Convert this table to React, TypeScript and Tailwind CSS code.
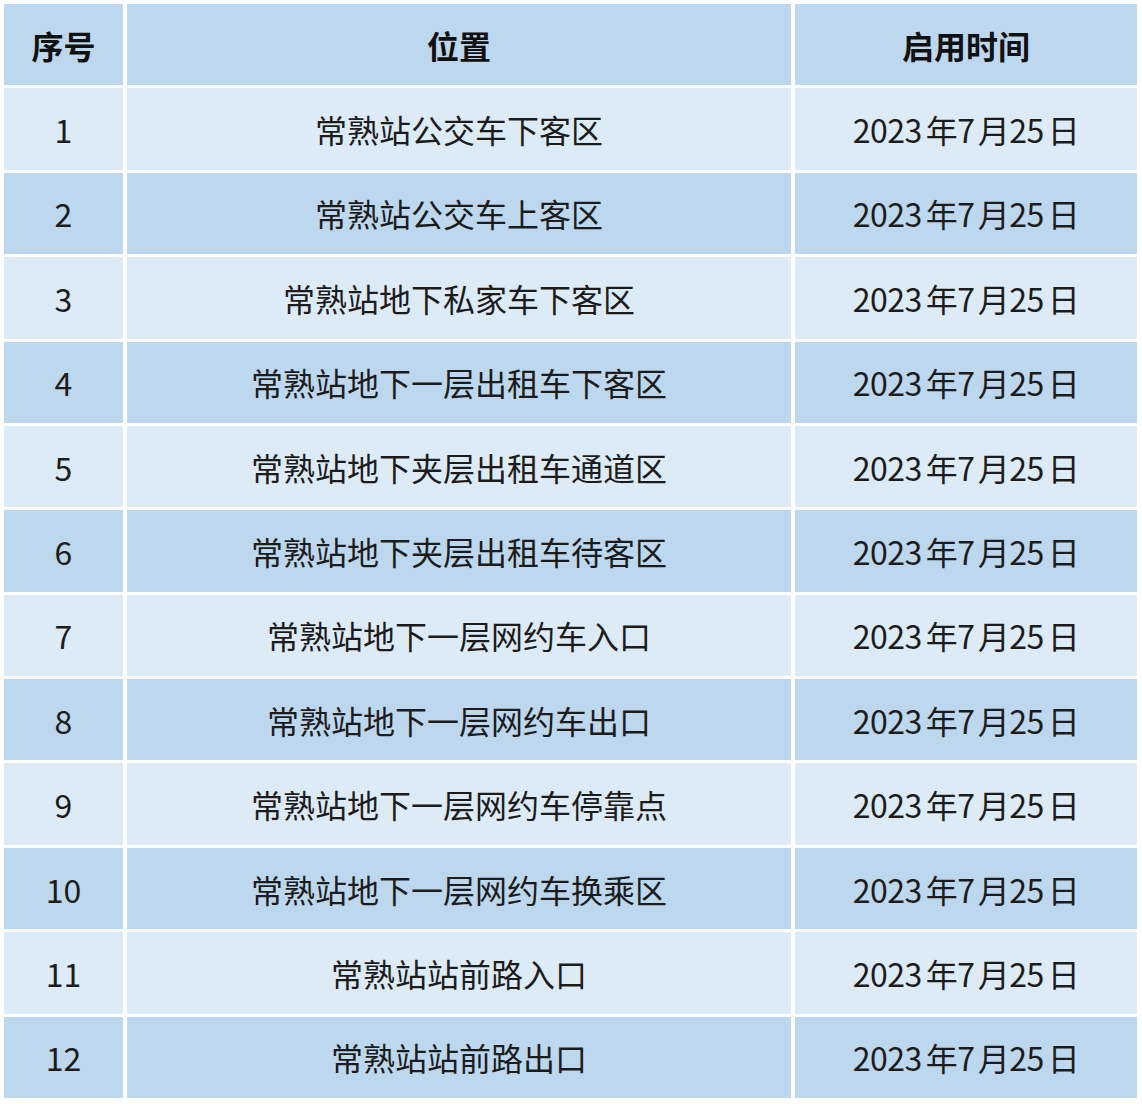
import React from "react";

const rows: string[] = [
  "常熟站公交车下客区",
  "常熟站公交车上客区",
  "常熟站地下私家车下客区",
  "常熟站地下一层出租车下客区",
  "常熟站地下夹层出租车通道区",
  "常熟站地下夹层出租车待客区",
  "常熟站地下一层网约车入口",
  "常熟站地下一层网约车出口",
  "常熟站地下一层网约车停靠点",
  "常熟站地下一层网约车换乘区",
  "常熟站站前路入口",
  "常熟站站前路出口",
];

function DateText() {
  return (
    <span className="tracking-[-0.5px]">
      2023<span className="ml-[4px]">年</span>7<span className="ml-[3px]">月</span>25
      <span className="ml-[4px]">日</span>
    </span>
  );
}

export default function App() {
  const cell = "flex items-center justify-center";
  return (
    <div
      className="w-[1142px] h-[1104px] bg-white pt-[4px] pl-[4px]"
      style={{ fontFamily: '"Noto Sans CJK SC", "Noto Sans", sans-serif' }}
    >
      <div className="grid w-[1133px] h-[1094px] grid-cols-[119px_1fr_342px] grid-rows-[repeat(13,1fr)] gap-x-[4px] gap-y-[3px] text-[32px] text-[#1c1c1c]">
        <div className={`${cell} bg-[#bdd7ee] font-bold text-[#111]`}>序号</div>
        <div className={`${cell} bg-[#bdd7ee] font-bold text-[#111]`}>位置</div>
        <div className={`${cell} bg-[#bdd7ee] font-bold text-[#111]`}>启用时间</div>
        {rows.map((r, i) => {
          const bg = i % 2 === 0 ? "bg-[#ddebf7]" : "bg-[#bdd7ee]";
          return (
            <React.Fragment key={i}>
              <div className={`${cell} ${bg}`}>{i + 1}</div>
              <div className={`${cell} ${bg}`}>{r}</div>
              <div className={`${cell} ${bg}`}>
                <DateText />
              </div>
            </React.Fragment>
          );
        })}
      </div>
    </div>
  );
}
